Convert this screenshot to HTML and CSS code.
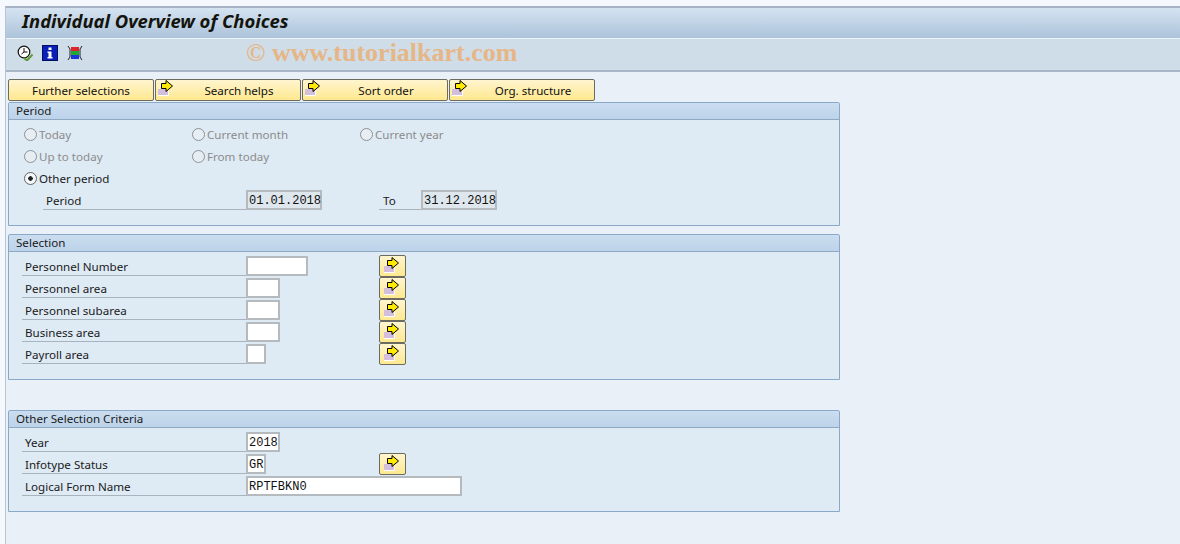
FILE: index.html
```html
<!DOCTYPE html>
<html lang="en">
<head>
<meta charset="utf-8">
<title>Individual Overview of Choices</title>
<link rel="stylesheet" href="styles.css">
</head>
<body>
<svg class="defs" width="0" height="0" aria-hidden="true">
  <symbol id="arrow" viewBox="0 0 16 16">
    <rect x="1" y="9" width="10" height="7" fill="#d3bfdc"/>
    <path d="M1 15.5H11.5V11" fill="none" stroke="#fff"/>
    <path d="M4.5 3.5H9V0.5L15.5 6L9 11.5V8.5H4.5Z" fill="#ffea00" stroke="#000" stroke-width="1"/>
  </symbol>
</svg>
<div class="strip"></div>
<main class="screen">
  <h1 class="title">Individual Overview of Choices</h1>
  <div class="toolbar">
    <svg class="tool" width="16" height="16" viewBox="0 0 16 16">
      <circle cx="7" cy="7" r="5.8" fill="#fff" stroke="#111" stroke-width="1.2"/>
      <path d="M7 3V7H10.5M7 7L4.5 9" fill="none" stroke="#111" stroke-width="1"/>
      <path d="M7 13L10 15.5L15.5 9.5" fill="none" stroke="#5f9a3a" stroke-width="2"/>
    </svg>
    <svg class="tool" width="16" height="16" viewBox="0 0 16 16">
      <rect x="0.5" y="0.5" width="15" height="15" fill="#0a1fb8" stroke="#001060"/>
      <path d="M6.5 2.5H9.5V5H6.5ZM5.5 6.5H9.5V12H10.5V13.5H5.5V12H6.5V8H5.5Z" fill="#fff"/>
    </svg>
    <svg class="tool" width="16" height="16" viewBox="0 0 16 16">
      <path d="M1 1L3 4V12L1 15M15 1L13 4V12L15 15" fill="none" stroke="#222" stroke-width="1"/>
      <rect x="4" y="2" width="8" height="4" fill="#e0232a"/>
      <rect x="4" y="6" width="8" height="4" fill="#1fa83a"/>
      <rect x="4" y="10" width="8" height="4" fill="#1d34d8"/>
    </svg>
    <span class="watermark">© www.tutorialkart.com</span>
  </div>
  <div class="content">
    <div class="tabs">
      <button class="tab tab-plain"><span>Further selections</span></button>
      <button class="tab"><svg class="ic"><use href="#arrow"/></svg><span>Search helps</span></button>
      <button class="tab"><svg class="ic"><use href="#arrow"/></svg><span>Sort order</span></button>
      <button class="tab"><svg class="ic"><use href="#arrow"/></svg><span>Org. structure</span></button>
    </div>

    <section class="group group-period">
      <h2 class="group-head">Period</h2>
      <div class="group-body">
        <div class="row radios">
          <label class="radio off"><i class="dot"></i>Today</label>
          <label class="radio off"><i class="dot"></i>Current month</label>
          <label class="radio off"><i class="dot"></i>Current year</label>
        </div>
        <div class="row radios">
          <label class="radio off"><i class="dot"></i>Up to today</label>
          <label class="radio off"><i class="dot"></i>From today</label>
        </div>
        <div class="row radios">
          <label class="radio on"><i class="dot"></i>Other period</label>
        </div>
        <div class="row">
          <span class="label label-indent">Period</span>
          <span class="field ro w-date">01.01.2018</span>
          <span class="label label-to">To</span>
          <span class="field ro w-date">31.12.2018</span>
        </div>
      </div>
    </section>

    <section class="group group-selection">
      <h2 class="group-head">Selection</h2>
      <div class="group-body">
        <div class="row"><span class="label">Personnel Number</span><span class="cell"><span class="field w-62"></span></span><button class="pick"><svg class="ic"><use href="#arrow"/></svg></button></div>
        <div class="row"><span class="label">Personnel area</span><span class="cell"><span class="field w-34"></span></span><button class="pick"><svg class="ic"><use href="#arrow"/></svg></button></div>
        <div class="row"><span class="label">Personnel subarea</span><span class="cell"><span class="field w-34"></span></span><button class="pick"><svg class="ic"><use href="#arrow"/></svg></button></div>
        <div class="row"><span class="label">Business area</span><span class="cell"><span class="field w-34"></span></span><button class="pick"><svg class="ic"><use href="#arrow"/></svg></button></div>
        <div class="row"><span class="label">Payroll area</span><span class="cell"><span class="field w-20"></span></span><button class="pick"><svg class="ic"><use href="#arrow"/></svg></button></div>
      </div>
    </section>

    <section class="group group-other">
      <h2 class="group-head">Other Selection Criteria</h2>
      <div class="group-body">
        <div class="row"><span class="label">Year</span><span class="cell"><span class="field w-34">2018</span></span></div>
        <div class="row"><span class="label">Infotype Status</span><span class="cell"><span class="field w-20">GR</span></span><button class="pick"><svg class="ic"><use href="#arrow"/></svg></button></div>
        <div class="row"><span class="label">Logical Form Name</span><span class="field w-216">RPTFBKN0</span></div>
      </div>
    </section>
  </div>
</main>
</body>
</html>
```
FILE: styles.css
```css
* { box-sizing: border-box; }
html, body { margin: 0; padding: 0; }
body {
  width: 1180px;
  height: 544px;
  overflow: hidden;
  background: #f5f8fc;
  font-family: "Noto Sans", sans-serif;
  font-size: 11.6px;
  color: #1a1a1a;
}
.defs { position: absolute; }
.strip { height: 6px; }
.screen {
  margin-left: 5px;
  height: 538px;
  border-top: 2px solid #a7b2c5;
  border-left: 1px solid #b8c4d4;
  background: #e9f0f8;
}
.title {
  margin: 0;
  height: 31px;
  padding: 0 0 0 16px;
  line-height: 25px;
  font-family: "Noto Sans", sans-serif;
  font-size: 18.4px;
  font-weight: 700;
  font-style: italic;
  color: #14140c;
  background: linear-gradient(#d5e3f1, #acc3da);
  border-bottom: 1px solid #eef3f8;
}
.toolbar {
  height: 33px;
  display: flex;
  align-items: center;
  gap: 9px;
  padding: 0 0 4px 11px;
  background: #cfdde8;
  border-bottom: 2px solid #a8b6c8;
}
.tool { flex: none; }
.watermark {
  margin-left: 154px;
  font-family: "Liberation Serif", serif;
  font-size: 26px;
  font-weight: 700;
  line-height: 24px;
  color: #e6b687;
  white-space: nowrap;
}
.content { padding: 7px 0 0 2px; }
.tabs { display: flex; gap: 1px; height: 22px; }
.tab {
  position: relative;
  width: 146px;
  height: 22px;
  padding: 1px 0 0;
  border: 1px solid #6b6b60;
  border-radius: 2px;
  background: linear-gradient(#fff5cf, #ffe88f);
  font: inherit;
  color: #111;
  text-align: center;
}
.tab .ic { position: absolute; left: 1px; top: 0; }
.tab span { position: relative; left: 11px; }
.tab-plain span { left: 0; }
.ic { width: 16px; height: 16px; display: block; }
.group {
  width: 832px;
  margin-top: 1px;
  background: #deeaf4;
  border: 1px solid #8aa9c6;
  border-radius: 2px 2px 0 0;
}
.group-head {
  margin: 0;
  height: 17px;
  padding-left: 7px;
  font-size: 11.6px;
  font-weight: 400;
  line-height: 15px;
  background: linear-gradient(#cbddf0, #bcd3e9);
  border-bottom: 1px solid #8fa9c4;
}
.group-body { padding: 3px 0 0 13px; }
.group-period { height: 124px; }
.group-selection { height: 146px; margin-top: 8px; }
.group-other { height: 102px; margin-top: 30px; }
.row { display: flex; height: 22px; align-items: flex-start; }
.radios { align-items: center; }
.radio {
  width: 168px;
  display: flex;
  align-items: center;
  gap: 2px;
}
.radio:first-child { margin-left: 2px; }
.radio.off { color: #8c8c8c; }
.dot {
  width: 13px;
  height: 13px;
  border: 1px solid #8e9296;
  border-radius: 50%;
  background: #e6edf3;
}
.on .dot {
  background: radial-gradient(circle, #222 0 2px, #f4f7fa 2.5px);
  border-color: #666;
}
.label {
  width: 224px;
  height: 21px;
  padding: 3px 0 0 3px;
  border-bottom: 1px solid #a9b3bd;
  line-height: 17px;
}
.label-indent { width: 203px; margin-left: 21px; }
.label-to { width: 42px; margin-left: 57px; padding-left: 4px; }
.cell { width: 133px; }
.field {
  display: block;
  height: 20px;
  margin-top: 1px;
  padding: 0 0 0 1px;
  border: 2px solid #b4babe;
  background: #fff;
  font-family: "Liberation Mono", monospace;
  font-size: 12px;
  line-height: 18px;
  color: #111;
  white-space: nowrap;
}
.ro { background: #dfe7ee; }
.w-date { width: 76px; }
.w-62 { width: 62px; }
.w-34 { width: 34px; }
.w-20 { width: 20px; }
.w-216 { width: 216px; }
.pick {
  width: 27px;
  height: 22px;
  padding: 0 0 0 3px;
  border: 1px solid #6b6b60;
  border-radius: 2px;
  background: linear-gradient(#fff5cf, #ffe88f);
}
.pick .ic { margin-top: -2px; }
```
